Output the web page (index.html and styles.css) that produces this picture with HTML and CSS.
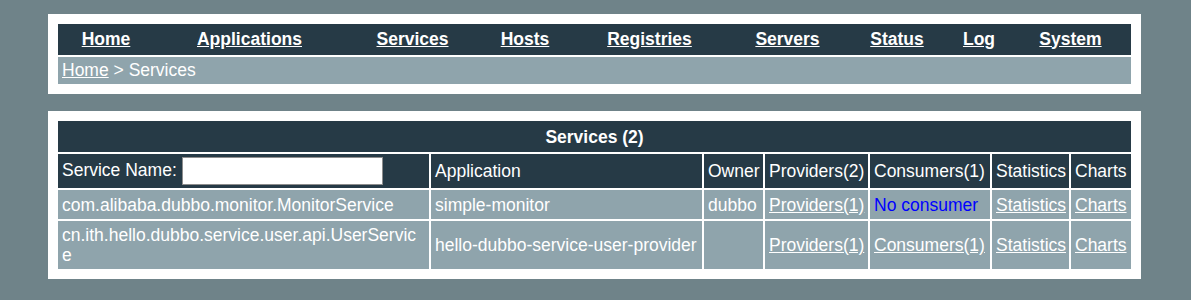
FILE: index.html
```html
<!DOCTYPE html>
<html lang="en">
<head>
<meta charset="utf-8">
<title>Services</title>
<link rel="stylesheet" href="styles.css">
</head>
<body>
<div class="panel top-panel">
  <nav class="menu">
    <a href="#">Home</a>
    <a href="#">Applications</a>
    <a href="#">Services</a>
    <a href="#">Hosts</a>
    <a href="#">Registries</a>
    <a href="#">Servers</a>
    <a href="#">Status</a>
    <a href="#">Log</a>
    <a href="#">System</a>
  </nav>
  <div class="crumbs"><a href="#">Home</a> &gt; Services</div>
</div>

<div class="panel table-panel">
  <table class="services">
    <colgroup>
      <col class="c-name">
      <col class="c-app">
      <col class="c-owner">
      <col class="c-prov">
      <col class="c-cons">
      <col class="c-stat">
      <col class="c-chart">
    </colgroup>
    <thead>
      <tr class="title-row"><th colspan="7">Services (2)</th></tr>
      <tr class="head-row">
        <td>Service Name: <input class="search" type="text"></td>
        <td>Application</td>
        <td>Owner</td>
        <td>Providers(2)</td>
        <td>Consumers(1)</td>
        <td>Statistics</td>
        <td>Charts</td>
      </tr>
    </thead>
    <tbody>
      <tr class="row-one">
        <td>com.alibaba.dubbo.monitor.MonitorService</td>
        <td>simple-monitor</td>
        <td>dubbo</td>
        <td><a href="#">Providers(1)</a></td>
        <td><span class="none">No consumer</span></td>
        <td><a href="#">Statistics</a></td>
        <td><a href="#">Charts</a></td>
      </tr>
      <tr class="row-two">
        <td class="wrap">cn.ith.hello.dubbo.service.user.api.UserService</td>
        <td>hello-dubbo-service-user-provider</td>
        <td></td>
        <td><a href="#">Providers(1)</a></td>
        <td><a href="#">Consumers(1)</a></td>
        <td><a href="#">Statistics</a></td>
        <td><a href="#">Charts</a></td>
      </tr>
    </tbody>
  </table>
</div>
</body>
</html>
```

FILE: styles.css
```css
html, body {
  margin: 0;
}
body {
  background: #6f8389;
  padding: 14px 50px 0 48px;
  font-family: "Liberation Sans", Arial, sans-serif;
  font-size: 17.5px;
  line-height: 20px;
  color: #ffffff;
}
a {
  color: #ffffff;
  text-decoration: underline;
}
.panel {
  background: #ffffff;
}
.top-panel {
  padding: 10px;
  margin-bottom: 17px;
}
.menu {
  display: grid;
  grid-template-columns: 96px 187px 135px 86px 159px 113px 102px 58px 121px;
  column-gap: 2px;
  align-items: center;
  height: 31px;
  background: #263a46;
  font-weight: bold;
  text-align: center;
}
.menu a {
  padding-bottom: 2px;
}
.crumbs {
  margin-top: 2px;
  height: 27px;
  box-sizing: border-box;
  padding: 3px 4px 0;
  background: #8fa4ac;
}
.table-panel {
  padding: 8px;
}
.services {
  width: 1077px;
  table-layout: fixed;
  border-collapse: separate;
  border-spacing: 2px;
}
.c-name { width: 371px; }
.c-app { width: 271px; }
.c-owner { width: 59px; }
.c-prov { width: 103px; }
.c-cons { width: 120px; }
.c-stat { width: 77px; }
.c-chart { width: 60px; }
.services th,
.services td {
  padding: 0 4px;
  text-align: left;
  vertical-align: middle;
  white-space: nowrap;
}
.title-row th {
  height: 31px;
  background: #263a46;
  text-align: center;
  font-weight: bold;
}
.head-row td {
  height: 34px;
  background: #263a46;
}
.row-one td {
  height: 29px;
  background: #8fa4ac;
}
.row-two td {
  height: 48px;
  background: #8fa4ac;
}
.services td.wrap {
  padding-right: 12px;
  white-space: normal;
  word-break: break-all;
}
.search {
  box-sizing: border-box;
  width: 201px;
  height: 28px;
  margin: 0;
  padding: 0 3px;
  border: 1px solid #8d8d8d;
  background: #ffffff;
  font: inherit;
  vertical-align: middle;
}
.none {
  color: #0000ff;
}
```
